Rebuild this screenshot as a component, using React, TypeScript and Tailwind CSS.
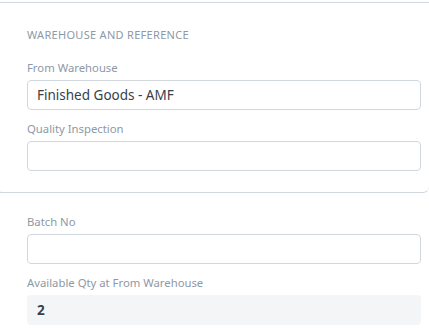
const LABEL = "text-[11.3px] leading-[18px] text-[#8d99a6]";
const INPUT =
  "h-[30px] w-full rounded-[4px] border border-[#d1d8dd] bg-white px-[9px] text-[13.5px] leading-[28px] text-[#36414c]";

function Field({ label, value }: { label: string; value?: string }) {
  return (
    <div>
      <div className={LABEL}>{label}</div>
      <div className={`mt-[3px] ${INPUT}`}>{value}</div>
    </div>
  );
}

export default function App() {
  return (
    <div
      className="h-[335px] w-[429px] overflow-hidden bg-white pt-[2px]"
      style={{ fontFamily: '"Noto Sans", "Open Sans", sans-serif' }}
    >
      <section className="-ml-[4px] w-[433px] rounded-b-md border border-r-0 border-[#d1d8dd] pb-[21px] pl-[30px] pr-[8px] pt-[24px]">
        <h3 className="text-[11px] uppercase leading-4 tracking-[0.3px] text-[#8d99a6]">
          Warehouse and Reference
        </h3>
        <div className="mt-[16px] flex flex-col gap-[10px]">
          <Field label="From Warehouse" value="Finished Goods - AMF" />
          <Field label="Quality Inspection" />
        </div>
      </section>
      <div className="flex flex-col gap-[10px] pl-[27px] pr-[8px] pt-[20px]">
        <Field label="Batch No" />
        <div>
          <div className={LABEL}>Available Qty at From Warehouse</div>
          <div className="mt-[3px] h-[30px] w-full rounded-[4px] bg-[#f4f5f6] px-[10px] text-[13.5px] font-bold leading-[30px] text-[#36414c]">
            2
          </div>
        </div>
      </div>
    </div>
  );
}
